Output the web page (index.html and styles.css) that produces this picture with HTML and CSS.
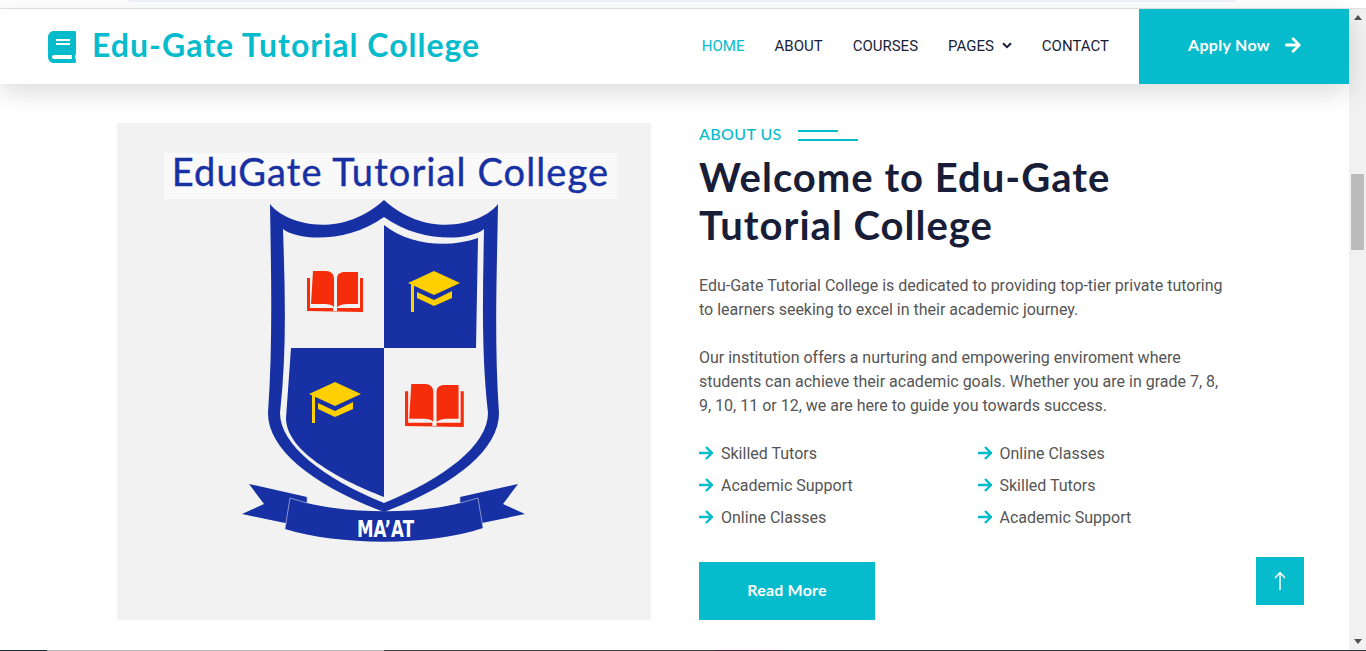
FILE: index.html
```html
<!DOCTYPE html>
<html>
<head>
    <title>Edu-Gate Tutorial College</title>
    <link rel="stylesheet" href="styles.css">
</head>
<body>
    <div class="top-strip"><div class="top-band"></div></div>
    <div class="window">
        <div class="page">
            <header class="navbar">
                <a class="brand">
                    <svg class="brand-icon" viewBox="0 0 448 512"><path d="M448 360V24c0-13.300-10.700-24-24-24H96C43 0 0 43 0 96v320c0 53 43 96 96 96h328c13.300 0 24-10.700 24-24v-16c0-7.500-3.500-14.300-8.900-18.700-4.200-15.400-4.200-59.300 0-74.700 5.400-4.300 8.900-11.100 8.900-18.600zM128 134c0-3.300 2.700-6 6-6h212c3.300 0 6 2.700 6 6v20c0 3.300-2.700 6-6 6H134c-3.300 0-6-2.700-6-6v-20zm0 64c0-3.300 2.700-6 6-6h212c3.300 0 6 2.700 6 6v20c0 3.300-2.700 6-6 6H134c-3.300 0-6-2.700-6-6v-20zm253.400 250H96c-17.700 0-32-14.300-32-32 0-17.600 14.400-32 32-32h285.400c-1.900 17.100-1.900 46.900 0 64z"/></svg>
                    <span class="brand-name">Edu-Gate Tutorial College</span>
                </a>
                <nav class="nav-links">
                    <a class="nav-link active">HOME</a>
                    <a class="nav-link">ABOUT</a>
                    <a class="nav-link">COURSES</a>
                    <a class="nav-link">PAGES
                        <svg class="chevron" viewBox="0 0 10 7"><path d="M1 1.200 5 5.200 9 1.200"/></svg>
                    </a>
                    <a class="nav-link">CONTACT</a>
                </nav>
                <a class="apply-btn">
                    <span class="apply-label">Apply Now</span>
                    <svg class="apply-arrow" viewBox="0 0 448 512"><path d="M190.500 66.900l22.200-22.200c9.400-9.400 24.600-9.400 33.900 0L441 239c9.400 9.400 9.400 24.600 0 33.900L246.600 467.300c-9.400 9.400-24.600 9.400-33.900 0l-22.200-22.200c-9.500-9.500-9.300-25 .4-34.300L311.400 296H24c-13.300 0-24-10.700-24-24v-32c0-13.300 10.700-24 24-24h287.400L190.900 101.200c-9.800-9.300-10-24.800-.4-34.300z"/></svg>
                </a>
            </header>

            <section class="about">
                <div class="about-image">
                    <div class="crest-title">EduGate Tutorial College</div>
                    <svg class="crest" viewBox="242 199 284 346">
                        <defs>
                            <g id="book">
                                <path fill="#f62d0b" d="M0 7H3V37H26V40H30V37H53V7H56V41L0 40Z"/>
                                <path fill="#f62d0b" d="M6 0H19C24 0 27 3 27 8V36C24 33 20 33 16 33H4Z"/>
                                <path fill="#f62d0b" d="M30 8C30 3 33 1 38 1H51V33H40C36 33 33 34 30 36Z"/>
                            </g>
                            <g id="cap">
                                <path fill="#ffcf00" d="M26 0 52 12 26 24 0 12Z"/>
                                <path fill="#ffcf00" d="M3 13H6V41H3Z"/>
                                <path fill="#ffcf00" d="M9 21 26 29 44 20V27L26 35 9 27Z"/>
                            </g>
                        </defs>
                        <path fill="#1730a3" fill-rule="evenodd" d="M270 204C285 224 340 240 384 200C428 240 483 224 498 204C497 270 494 340 499 413C499 450 455 485 384 512C313 485 268 450 268 413C273 340 271 270 270 204ZM283 229C300 242 350 242 384 217C418 242 468 242 484 229C483 290 481 350 488 413C488 445 445 478 384 503C323 478 280 445 280 413C287 350 285 290 283 229Z"/>
                        <path fill="#1730a3" d="M384 225C410 246 450 248 478 238L476 348H384Z"/>
                        <path fill="#1730a3" d="M291 348H384V497C335 478 286 450 286 418Z"/>
                        <path fill="#1730a3" d="M249 484 307 497V510L285 523 242 514 264 504Z"/>
                        <path fill="#1730a3" d="M518 484 460 497V510L482 523 525 514 503 504Z"/>
                        <path fill="#1730a3" d="M290 498 307 503C350 514 420 514 460 503L478 498 483 528C430 546 340 546 285 529Z"/>
                        <path class="ribbon-fold" d="M285 529 290 498 307 503V497M483 528 478 498 460 503V497"/>
                        <use href="#book" x="307" y="271"/>
                        <use href="#book" transform="translate(405 384) scale(1.050)"/>
                        <use href="#cap" x="408" y="271"/>
                        <use href="#cap" x="309" y="382"/>
                        <text class="crest-motto" x="357" y="537" textLength="57" lengthAdjust="spacingAndGlyphs">MA’AT</text>
                    </svg>
                </div>

                <div class="about-text">
                    <div class="eyebrow">
                        <span>ABOUT US</span>
                        <div class="eyebrow-lines">
                            <div class="line-short"></div>
                            <div class="line-long"></div>
                        </div>
                    </div>
                    <h1 class="about-title">Welcome to Edu-Gate Tutorial College</h1>
                    <p class="about-copy">Edu-Gate Tutorial College is dedicated to providing top-tier private tutoring to learners seeking to excel in their academic journey.<br><br>Our institution offers a nurturing and empowering enviroment where students can achieve their academic goals. Whether you are in grade 7, 8, 9, 10, 11 or 12, we are here to guide you towards success.</p>
                    <ul class="feature-list">
                        <li><svg class="tick" viewBox="0 0 14 14"><path d="M0 7H13M7 1 13 7 7 13"/></svg>Skilled Tutors</li>
                        <li><svg class="tick" viewBox="0 0 14 14"><path d="M0 7H13M7 1 13 7 7 13"/></svg>Online Classes</li>
                        <li><svg class="tick" viewBox="0 0 14 14"><path d="M0 7H13M7 1 13 7 7 13"/></svg>Academic Support</li>
                        <li><svg class="tick" viewBox="0 0 14 14"><path d="M0 7H13M7 1 13 7 7 13"/></svg>Skilled Tutors</li>
                        <li><svg class="tick" viewBox="0 0 14 14"><path d="M0 7H13M7 1 13 7 7 13"/></svg>Online Classes</li>
                        <li><svg class="tick" viewBox="0 0 14 14"><path d="M0 7H13M7 1 13 7 7 13"/></svg>Academic Support</li>
                    </ul>
                    <a class="read-more"><span class="read-more-label">Read More</span></a>
                </div>
            </section>

            <a class="back-top">
                <svg viewBox="0 0 14 20"><path d="M7 19V2M2 7 7 1.500 12 7"/></svg>
            </a>
        </div>

        <div class="scrollbar">
            <div class="scroll-up"></div>
            <div class="scroll-thumb"></div>
            <div class="scroll-down"></div>
        </div>
    </div>
    <div class="bottom-strip">
        <div class="strip-navy"></div>
        <div class="strip-grey"></div>
        <div class="strip-dark"></div>
        <div class="strip-plum"></div>
        <div class="strip-slate"></div>
    </div>
</body>
</html>
```

FILE: styles.css
```css
html, body {
    height: 100%;
    margin: 0;
    padding: 0;
    overflow: hidden;
}

body {
    display: flex;
    flex-direction: column;
    background-color: white;
    font-family: "Roboto", sans-serif;
    color: #555;
}

a {
    text-decoration: none;
}

.top-strip {
    height: 8px;
    border-bottom: 1px solid #e4e4e4;
}

.top-band {
    height: 2px;
    margin: 0 130px 0 128px;
    background-color: #eef1fb;
    border-radius: 0 0 6px 6px;
}

.window {
    flex: 1;
    display: flex;
    min-height: 0;
}

.page {
    flex: 1;
    position: relative;
    min-width: 0;
}

/* navbar */
.navbar {
    height: 75px;
    display: flex;
    align-items: center;
    padding-left: 48px;
    background-color: white;
    box-shadow: 0 8px 24px rgba(0, 0, 0, 0.14);
}

.brand {
    display: flex;
    align-items: center;
    gap: 16px;
    color: #06bbcc;
    font-family: "Lato", sans-serif;
    font-size: 32px;
    font-weight: 700;
    letter-spacing: 1px;
}

.brand-icon {
    width: 28px;
    height: 32px;
    fill: #06bbcc;
}

.brand-name {
    margin-top: -4px;
}

.nav-links {
    display: flex;
    gap: 30px;
    margin: -2px 30px 0 auto;
}

.nav-link {
    display: flex;
    align-items: center;
    gap: 8px;
    color: #181d38;
    font-size: 15px;
    font-weight: 400;
}

.nav-link.active {
    color: #06bbcc;
}

.chevron {
    width: 10px;
    height: 7px;
    fill: none;
    stroke: #181d38;
    stroke-width: 2;
}

.apply-btn {
    width: 210px;
    height: 75px;
    display: flex;
    align-items: center;
    justify-content: center;
    gap: 15px;
    padding-left: 1px;
    box-sizing: border-box;
    background-color: #06bbcc;
    color: white;
    font-family: "Lato", sans-serif;
    font-size: 16px;
    font-weight: 700;
    letter-spacing: 0.3px;
}

.apply-label {
    margin-top: -5px;
}

.apply-arrow {
    width: 16px;
    height: 18px;
    margin-top: -3px;
    fill: white;
}

/* about section */
.about {
    display: flex;
    gap: 48px;
    padding: 39px 117px 0;
}

.about-image {
    width: 534px;
    height: 497px;
    flex-shrink: 0;
    display: flex;
    flex-direction: column;
    align-items: center;
    background-color: #f2f2f2;
}

.crest-title {
    width: 453px;
    height: 46px;
    margin: 30px 0 0 13px;
    background-color: #f9f9fa;
    color: #1730a3;
    font-family: "Lato", sans-serif;
    font-size: 38px;
    line-height: 36px;
    letter-spacing: 1.100px;
    -webkit-text-stroke: 0.4px #1730a3;
    text-align: center;
    white-space: nowrap;
}

.crest {
    width: 284px;
    height: 346px;
}

.ribbon-fold {
    fill: none;
    stroke: #b4bde0;
    stroke-width: 0.7;
}

.crest-motto {
    font-family: "DejaVu Sans", sans-serif;
    font-size: 23px;
    font-weight: 700;
    fill: white;
}

.about-text {
    width: 533px;
}

.eyebrow {
    display: flex;
    align-items: center;
    gap: 16px;
    height: 22px;
    margin-top: -1px;
    color: #06bbcc;
    font-family: "Lato", sans-serif;
    font-size: 16px;
    font-weight: 500;
    letter-spacing: 0.4px;
}

.eyebrow-lines {
    display: flex;
    flex-direction: column;
    gap: 7px;
    margin-top: 5px;
}

.line-short {
    width: 40px;
    height: 2px;
    background-color: #06bbcc;
}

.line-long {
    width: 60px;
    height: 2px;
    background-color: #06bbcc;
}

.about-title {
    width: 480px;
    margin: 9px 0 0;
    color: #181d38;
    font-family: "Lato", sans-serif;
    font-size: 40px;
    font-weight: 700;
    line-height: 48px;
    letter-spacing: 1px;
}

.about-copy {
    margin: 25px 0 0;
    font-size: 16px;
    line-height: 24px;
}

.feature-list {
    list-style: none;
    display: grid;
    grid-template-columns: 278.500px 1fr;
    grid-auto-rows: 32px;
    margin: 19px 0 0;
    padding: 0;
    font-size: 16px;
}

.feature-list li {
    display: flex;
    align-items: center;
    gap: 8px;
}

.tick {
    width: 14px;
    height: 14px;
    fill: none;
    stroke: #06bbcc;
    stroke-width: 2.400;
}

.read-more {
    width: 176px;
    height: 58px;
    margin-top: 29px;
    display: flex;
    align-items: center;
    justify-content: center;
    background-color: #06bbcc;
    color: white;
    font-family: "Lato", sans-serif;
    font-size: 16px;
    font-weight: 700;
    letter-spacing: 0.2px;
}

.read-more-label {
    margin-top: -4px;
}

.back-top {
    position: absolute;
    right: 45px;
    bottom: 45px;
    width: 48px;
    height: 48px;
    display: flex;
    align-items: center;
    justify-content: center;
    background-color: #06bbcc;
}

.back-top svg {
    width: 14px;
    height: 20px;
    fill: none;
    stroke: white;
    stroke-width: 1.500;
}

/* scrollbar */
.scrollbar {
    width: 17px;
    display: flex;
    flex-direction: column;
    align-items: center;
    background-color: #f1f1f1;
}

.scroll-up {
    margin-top: 6px;
    border-left: 4px solid transparent;
    border-right: 4px solid transparent;
    border-bottom: 5px solid #505050;
}

.scroll-thumb {
    width: 13px;
    height: 76px;
    margin-top: 154px;
    background-color: #bbb;
}

.scroll-down {
    margin-top: auto;
    margin-bottom: 6px;
    border-left: 4px solid transparent;
    border-right: 4px solid transparent;
    border-top: 5px solid #505050;
}

.bottom-strip {
    height: 1px;
    display: flex;
}

.strip-navy { width: 47px; background-color: #1a2c3c; }
.strip-grey { width: 337px; background-color: #b9b9b9; }
.strip-dark { width: 330px; background-color: #444; }
.strip-plum { width: 70px; background-color: #4c2a44; }
.strip-slate { flex: 1; background-color: #2b3a44; }
```
